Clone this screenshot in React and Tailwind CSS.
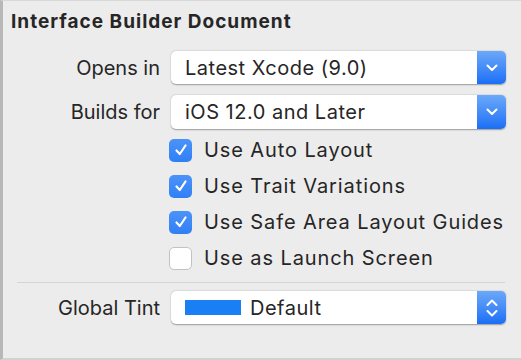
import React from "react";

const font = { fontFamily: 'Inter, "Liberation Sans", Arial, sans-serif' };

function Chevron() {
  return (
    <svg width="12" height="8" viewBox="0 0 12 8">
      <path d="M1.5 1.5 L6 6 L10.5 1.5" fill="none" stroke="white" strokeWidth="2" strokeLinecap="round" strokeLinejoin="round" />
    </svg>
  );
}

function Stepper() {
  return (
    <svg width="12" height="20" viewBox="0 0 12 20">
      <path d="M1.5 7 L6 2.5 L10.5 7" fill="none" stroke="white" strokeWidth="2" strokeLinecap="round" strokeLinejoin="round" />
      <path d="M1.5 13 L6 17.5 L10.5 13" fill="none" stroke="white" strokeWidth="2" strokeLinecap="round" strokeLinejoin="round" />
    </svg>
  );
}

function Popup({ children, stepper, className }) {
  return (
    <div className={"flex w-[335px] rounded-[5px] bg-white shadow-[0_0.5px_1.5px_rgba(0,0,0,0.35)] " + className}>
      <div className="flex-1 flex items-center pl-[14px] text-[20px] tracking-[0.5px] text-[#262626]">{children}</div>
      <div className="w-[29px] flex items-center justify-center rounded-r-[5px] bg-gradient-to-b from-[#6aa8f8] to-[#1a6ef6]">
        {stepper ? <Stepper /> : <Chevron />}
      </div>
    </div>
  );
}

function Check({ on, label }) {
  return (
    <div className="flex items-center h-[36px]">
      {on ? (
        <div className="w-[23px] h-[23px] rounded-[5px] bg-gradient-to-b from-[#4b93f8] to-[#2f7ff6] flex items-center justify-center">
          <svg width="14" height="14" viewBox="0 0 14 14">
            <path d="M2.5 7.5 L5.8 11 L11.5 2.5" fill="none" stroke="white" strokeWidth="2.2" strokeLinecap="round" strokeLinejoin="round" />
          </svg>
        </div>
      ) : (
        <div className="w-[23px] h-[23px] rounded-[5px] bg-white border border-[#c2c2c2]" />
      )}
      <span className="ml-[12px] text-[20px] tracking-[0.9px] text-[#262626]">{label}</span>
    </div>
  );
}

export default function App() {
  return (
    <div style={font} className="w-[521px] h-[360px] bg-[#ececec] border-t border-[#d8d8d8] border-l-[3px] border-l-[#b8b8b8] border-b-2 border-b-[#d2d2d2] overflow-hidden">
      <div className="pl-[8px] pt-[10px] text-[19px] leading-[22px] tracking-[1px] font-bold text-[#262626]">Interface Builder Document</div>

      <div className="mt-[18px] flex items-center">
        <div className="w-[157px] text-right text-[20px] text-[#262626]">Opens in</div>
        <Popup className="ml-[11px] h-[33px]">Latest Xcode (9.0)</Popup>
      </div>
      <div className="mt-[11px] flex items-center">
        <div className="w-[157px] text-right text-[20px] text-[#262626]">Builds for</div>
        <Popup className="ml-[11px] h-[34px]">iOS 12.0 and Later</Popup>
      </div>

      <div className="mt-[3px] ml-[166px] flex flex-col">
        <Check on label="Use Auto Layout" />
        <Check on label="Use Trait Variations" />
        <Check on label="Use Safe Area Layout Guides" />
        <Check label="Use as Launch Screen" />
      </div>

      <div className="mt-[6px] ml-[14px] w-[488px] h-px bg-[#d4d4d4]" />

      <div className="mt-[8px] flex items-center">
        <div className="w-[157px] text-right text-[20px] text-[#262626]">Global Tint</div>
        <Popup stepper className="ml-[11px] h-[33px]">
          <span className="w-[56px] h-[15px] bg-[#1a7ef5] mr-[9px]" />
          Default
        </Popup>
      </div>
    </div>
  );
}
